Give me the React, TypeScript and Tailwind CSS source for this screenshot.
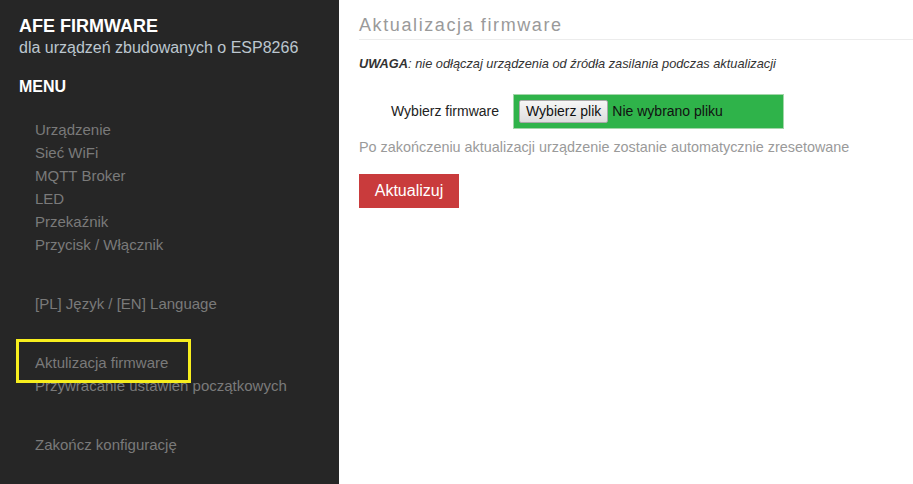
import React from 'react';

const mainLinks = ['Urządzenie', 'Sieć WiFi', 'MQTT Broker', 'LED', 'Przekaźnik', 'Przycisk / Włącznik'];

export default function App() {
  return (
    <div
      className="flex h-[484px] w-[913px] overflow-hidden bg-white"
      style={{ fontFamily: '"Liberation Sans", Arial, sans-serif' }}
    >
      <aside className="relative w-[339px] shrink-0 bg-[#262626] pl-[19px] pt-[14px]">
        <h1 className="text-[18px] font-bold leading-[24px] text-white">AFE FIRMWARE</h1>
        <p className="text-[16px] leading-[20px] text-[#bcc6cf]">dla urządzeń zbudowanych o ESP8266</p>
        <h2 className="mt-[19px] text-[16px] font-bold leading-[20px] text-white">MENU</h2>

        <ul className="mt-[21px] pl-[16px] text-[15px] leading-[23px] text-[#7a7a7a]">
          {mainLinks.map((l) => (
            <li key={l}>{l}</li>
          ))}
          <li className="mt-[36px]">[PL] Język / [EN] Language</li>
          <li className="mt-[36px]">Aktulizacja firmware</li>
          <li>Przywracanie ustawień początkowych</li>
          <li className="mt-[36px]">Zakończ konfigurację</li>
        </ul>

        {/* highlight annotation */}
        <div className="absolute left-[16px] top-[339px] h-[44px] w-[175px] border-[3px] border-[#f7ee1e]" />
      </aside>

      <main className="flex-1 pl-[20px] pt-[15px]">
        <h2 className="border-b border-[#ececec] pb-[4px] text-[18px] leading-[20px] tracking-[1.6px] text-[#9a9a9a]">
          Aktualizacja firmware
        </h2>

        <p className="mt-[16px] text-[12.8px] italic leading-[16px] text-[#333]">
          <b>UWAGA</b>: nie odłączaj urządzenia od źródła zasilania podczas aktualizacji
        </p>

        <div className="mt-[22px] flex items-center">
          <label className="w-[154px] pl-[32px] text-[14px] text-[#222]">Wybierz firmware</label>
          <div className="flex h-[35px] w-[271px] items-center border border-[#a3d6a9] bg-[#2fb34a] pl-[5px] text-[14px] text-[#111]">
            <span className="flex h-[23px] items-center rounded-[2px] border border-[#a9a9a9] bg-gradient-to-b from-[#f6f6f6] to-[#dedede] px-[6px] text-[14px]">
              Wybierz plik
            </span>
            <span className="ml-[4px]">Nie wybrano pliku</span>
          </div>
        </div>

        <p className="mt-[9px] text-[14.4px] leading-[18px] text-[#9a9a9a]">
          Po zakończeniu aktualizacji urządzenie zostanie automatycznie zresetowane
        </p>

        <button className="mt-[18px] h-[34px] w-[100px] bg-[#c93b3c] text-[16px] text-white">
          Aktualizuj
        </button>
      </main>
    </div>
  );
}
